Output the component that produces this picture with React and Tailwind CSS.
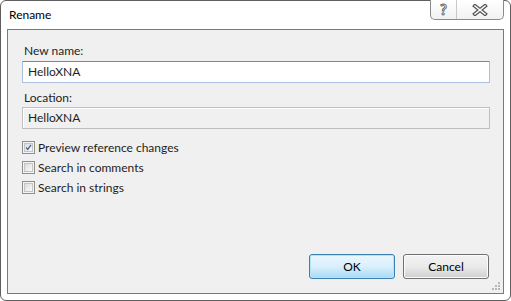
import React from 'react';

const font = { fontFamily: 'Lato, "Noto Sans", "Liberation Sans", sans-serif' };

function CheckBox({ checked, label }) {
  return (
    <div className="flex items-center h-[20px]">
      <div className="w-[13px] h-[13px] border border-[#8e8f8f] bg-[#f4f4f4] flex items-center justify-center shrink-0">
        <div className="w-[9px] h-[9px] border border-[#c4c4c4] bg-gradient-to-br from-[#dcdcdc] to-[#fafafa] flex items-center justify-center">
          {checked && (
            <svg width="9" height="9" viewBox="0 0 9 9">
              <path d="M1.5 4.5 L3.5 7 L7.8 1.2" fill="none" stroke="#4a5f97" strokeWidth="1.6" />
            </svg>
          )}
        </div>
      </div>
      <span className="ml-[3px] text-[12px] text-[#1e1e1e] leading-[15px]">{label}</span>
    </div>
  );
}

export default function App() {
  return (
    <div className="w-[511px] h-[301px] bg-white" style={font}>
      <div className="relative w-full h-full border border-[#5f5f5f] rounded-[6px] bg-white flex flex-col px-[6px] pb-[6px]">
        {/* Title bar */}
        <div className="h-[28px] flex items-center pl-[2px] text-[12px] text-black">Rename</div>

        {/* Help / close */}
        <div className="absolute top-[-1px] right-[6px] flex h-[20px] border border-t-0 border-[#8a8a8a] rounded-b-[5px] bg-gradient-to-b from-[#ffffff] to-[#f1f1f1] overflow-hidden">
          <div className="w-[26px] flex items-center justify-center border-r border-[#c9c9c9]">
            <span className="text-[15px] font-bold leading-none text-white [-webkit-text-stroke:0.8px_#4a4a4a]">?</span>
          </div>
          <div className="w-[46px] flex items-center justify-center">
            <svg width="16" height="12" viewBox="0 0 16 12">
              <path d="M3 2 L13 10 M13 2 L3 10" stroke="#555" strokeWidth="4" strokeLinecap="square" />
              <path d="M3 2 L13 10 M13 2 L3 10" stroke="#fff" strokeWidth="1.6" strokeLinecap="square" />
            </svg>
          </div>
        </div>

        {/* Panel */}
        <div className="relative flex-1 border border-[#7a7a7a] bg-[#f0f0f0] flex flex-col pt-[13px] pl-[14px] pr-[13px] pb-[14px]">
          <div className="ml-[2px] text-[12px] leading-[15px] text-[#1e1e1e]">New name:</div>
          <div className="mt-[3px] h-[22px] border border-[#abc1de] border-t-[#5d8cc9] bg-white flex items-center pl-[5px] text-[12px] text-[#1e1e1e]">
            HelloXNA
          </div>
          <div className="mt-[7px] ml-[2px] text-[12px] leading-[15px] text-[#1e1e1e]">Location:</div>
          <div className="mt-[2px] h-[22px] border border-[#bfbfbf] bg-[#f0f0f0] flex items-center pl-[5px] text-[12px] text-[#1e1e1e] shadow-[inset_1px_1px_0_#fff]">
            HelloXNA
          </div>
          <div className="mt-[8px] flex flex-col">
            <CheckBox checked label="Preview reference changes" />
            <CheckBox label="Search in comments" />
            <CheckBox label="Search in strings" />
          </div>

          <div className="mt-auto flex justify-end gap-[8px] pr-[1px]">
            <button className="w-[86px] h-[25px] rounded-[3px] border border-[#3c7fb1] bg-gradient-to-b from-[#eaf6fd] via-[#d9f0fc] to-[#a7d9f5] shadow-[inset_0_0_0_1px_#b8e2f8] text-[12px] text-black">
              OK
            </button>
            <button className="w-[86px] h-[25px] rounded-[3px] border border-[#707070] bg-gradient-to-b from-[#f2f2f2] via-[#ebebeb] to-[#cfcfcf] shadow-[inset_0_0_0_1px_#fcfcfc] text-[12px] text-black">
              Cancel
            </button>
          </div>

          {/* Resize grip */}
          <svg className="absolute right-[2px] bottom-[2px]" width="10" height="10" viewBox="0 0 10 10">
            <rect x="7" y="1" width="2" height="2" fill="#b8b8b8" />
            <rect x="4" y="4" width="2" height="2" fill="#b8b8b8" />
            <rect x="7" y="4" width="2" height="2" fill="#b8b8b8" />
            <rect x="1" y="7" width="2" height="2" fill="#b8b8b8" />
            <rect x="4" y="7" width="2" height="2" fill="#b8b8b8" />
            <rect x="7" y="7" width="2" height="2" fill="#b8b8b8" />
          </svg>
        </div>
      </div>
    </div>
  );
}
